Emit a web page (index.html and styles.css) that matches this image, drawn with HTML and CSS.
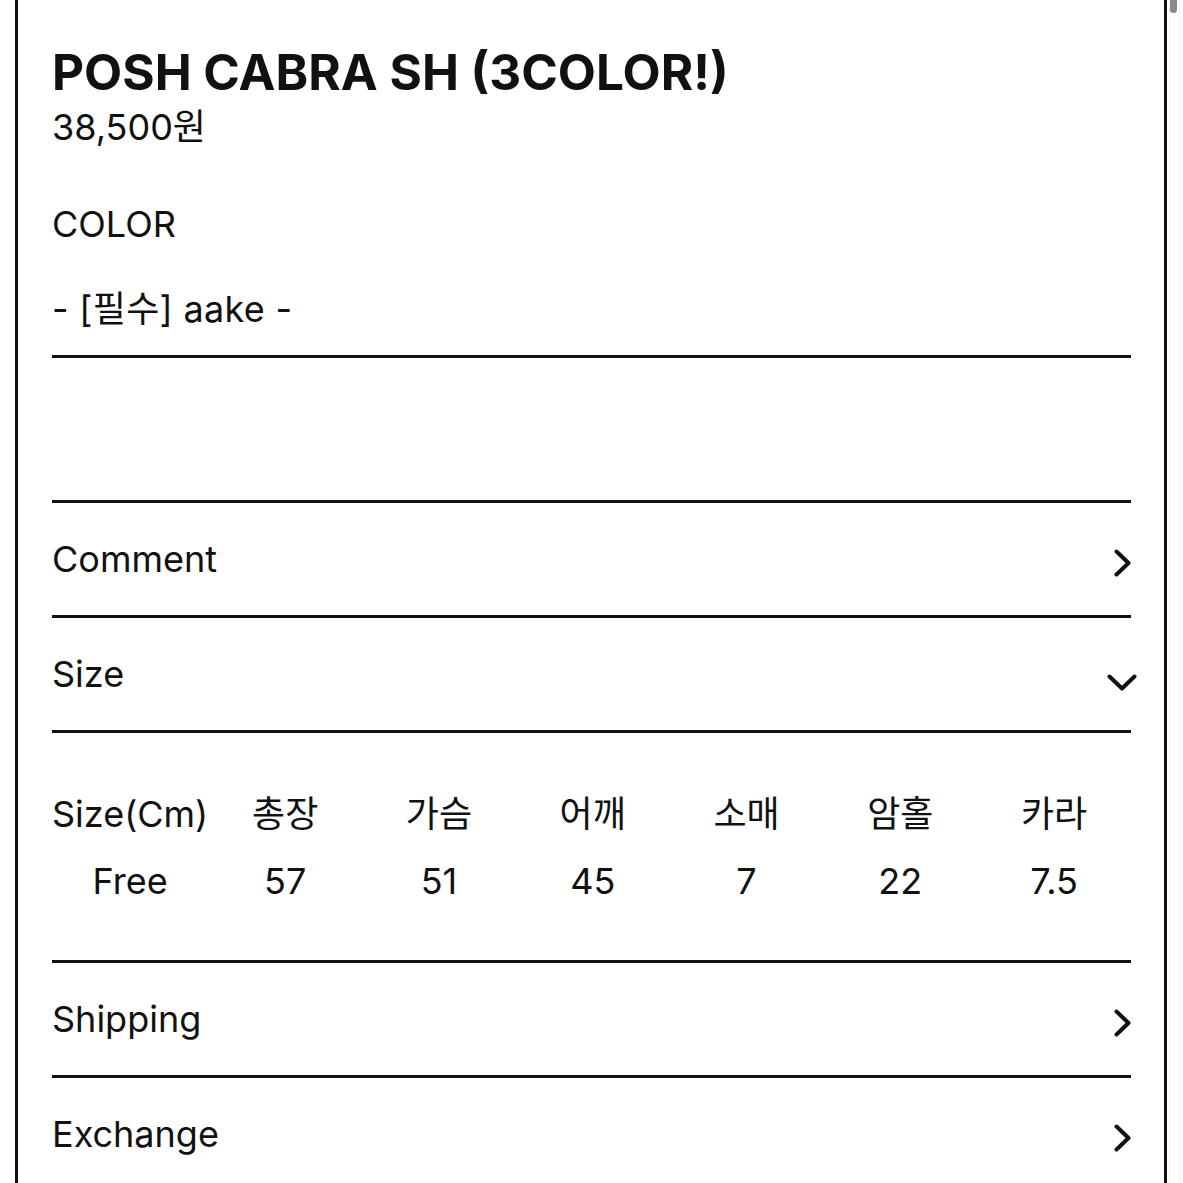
FILE: index.html
```html
<!DOCTYPE html>
<html lang="ko">
<head>
    <meta charset="UTF-8">
    <title>POSH CABRA SH (3COLOR!)</title>
    <link rel="stylesheet" href="styles.css">
</head>
<body>

    <div class="page">
        <div class="product-head">
            <h1 class="title">POSH CABRA SH (3COLOR!)</h1>
            <div class="price">38,500원</div>
        </div>

        <div class="option">
            <div class="option-label">COLOR</div>
            <div class="option-select">- [필수] aake -</div>
        </div>

        <div class="spacer"></div>

        <div class="row">
            <span>Comment</span>
            <svg class="chev-right" width="17" height="28" viewBox="0 0 17 28"><path d="M2.5 2.5 L14.5 14 L2.5 25.5" /></svg>
        </div>

        <div class="row">
            <span>Size</span>
            <svg class="chev-down" width="30" height="17" viewBox="0 0 30 17"><path d="M2.5 2.5 L15 14.5 L27.5 2.5" /></svg>
        </div>

        <div class="size-table">
            <div>Size(Cm)</div><div>총장</div><div>가슴</div><div>어깨</div><div>소매</div><div>암홀</div><div>카라</div>
            <div>Free</div><div>57</div><div>51</div><div>45</div><div>7</div><div>22</div><div>7.5</div>
        </div>

        <div class="row">
            <span>Shipping</span>
            <svg class="chev-right" width="17" height="28" viewBox="0 0 17 28"><path d="M2.5 2.5 L14.5 14 L2.5 25.5" /></svg>
        </div>

        <div class="row">
            <span>Exchange</span>
            <svg class="chev-right" width="17" height="28" viewBox="0 0 17 28"><path d="M2.5 2.5 L14.5 14 L2.5 25.5" /></svg>
        </div>
    </div>

    <div class="scroll-track"></div>
    <div class="scroll-thumb"></div>

</body>
</html>
```

FILE: styles.css
```css
body {
    margin: 0;
    font-family: Inter, "Noto Sans CJK KR", sans-serif;
    color: #111;
    background: #fff;
}
.page {
    margin-left: 15px;
    width: 1079px;
    min-height: 1183px;
    border-left: 3px solid #111;
    border-right: 3px solid #111;
    padding: 42px 33px 0 34px;
}
.title {
    margin: 0;
    font-size: 49.5px;
    line-height: 60px;
    font-weight: 700;
}
.price {
    font-size: 36px;
    line-height: 50px;
}
.option {
    margin-top: 47px;
    font-size: 36px;
    line-height: 50px;
}
.option-select {
    margin-top: 35px;
    padding-bottom: 21px;
    border-bottom: 3px solid #111;
    letter-spacing: 0.3px;
}
.spacer {
    height: 142px;
}
.row {
    display: flex;
    justify-content: space-between;
    align-items: center;
    height: 112px;
    border-top: 3px solid #111;
    font-size: 36px;
    line-height: 50px;
}
.row svg {
    fill: none;
    stroke: #111;
    stroke-width: 4;
    stroke-linecap: round;
    stroke-linejoin: round;
    margin-top: 8px;
}
.row .chev-down {
    margin-top: 16px;
    margin-right: -6px;
}
.size-table {
    display: grid;
    grid-template-columns: repeat(7, 1fr);
    row-gap: 17px;
    border-top: 3px solid #111;
    padding: 56px 0 54px;
    font-size: 36px;
    line-height: 50px;
    text-align: center;
}
.scroll-track {
    position: fixed;
    top: 0;
    right: 3px;
    width: 9px;
    height: 100%;
    border-left: 1px solid #f0f0f0;
    border-right: 1px solid #f0f0f0;
}
.scroll-thumb {
    position: fixed;
    top: -4px;
    right: 6px;
    width: 7px;
    height: 17px;
    border-radius: 4px;
    background: #8a8a8a;
}
```
